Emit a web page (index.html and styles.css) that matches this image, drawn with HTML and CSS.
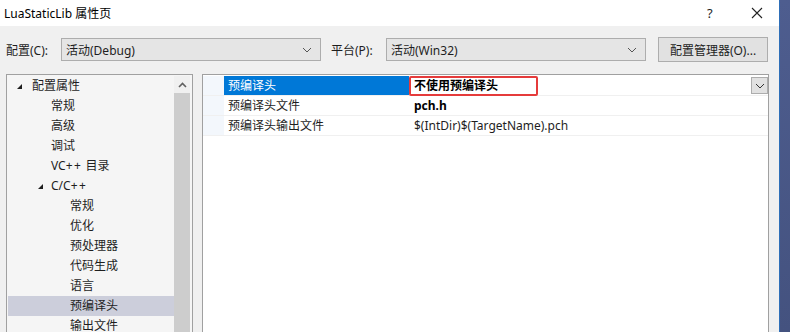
FILE: index.html
```html
<!DOCTYPE html>
<html lang="zh-CN">
<head>
    <meta charset="UTF-8">
    <title>LuaStaticLib 属性页</title>
    <link rel="stylesheet" href="styles.css">
</head>
<body>
    <div class="window">
        <div class="titlebar">
            <span class="title">LuaStaticLib 属性页</span>
            <span class="help">?</span>
            <span class="close">
                <svg width="12" height="12" viewBox="0 0 12 12"><path d="M1 1L11 11M11 1L1 11" stroke="#222" stroke-width="1.1"/></svg>
            </span>
        </div>

        <div class="toolbar">
            <span class="label">配置(C):</span>
            <div class="combo combo-config">
                <span>活动(Debug)</span>
                <svg class="chev" width="10" height="6" viewBox="0 0 10 6"><path d="M1 1L5 5L9 1" fill="none" stroke="#555" stroke-width="1"/></svg>
            </div>
            <span class="label label-platform">平台(P):</span>
            <div class="combo combo-platform">
                <span>活动(Win32)</span>
                <svg class="chev" width="10" height="6" viewBox="0 0 10 6"><path d="M1 1L5 5L9 1" fill="none" stroke="#555" stroke-width="1"/></svg>
            </div>
            <div class="button">配置管理器(O)...</div>
        </div>

        <div class="panels">
            <div class="tree">
                <div class="tree-items">
                    <div class="item lv0"><span class="tri"></span>配置属性</div>
                    <div class="item lv1">常规</div>
                    <div class="item lv1">高级</div>
                    <div class="item lv1">调试</div>
                    <div class="item lv1">VC<span class="pp">++</span> 目录</div>
                    <div class="item lv1 open"><span class="tri"></span>C/C<span class="pp">++</span></div>
                    <div class="item lv2">常规</div>
                    <div class="item lv2">优化</div>
                    <div class="item lv2">预处理器</div>
                    <div class="item lv2">代码生成</div>
                    <div class="item lv2">语言</div>
                    <div class="item lv2 selected">预编译头</div>
                    <div class="item lv2">输出文件</div>
                </div>
                <div class="scrollbar">
                    <div class="scroll-up">
                        <svg width="9" height="6" viewBox="0 0 9 6"><path d="M1 5L4.5 1.5L8 5" fill="none" stroke="#606060" stroke-width="1.6"/></svg>
                    </div>
                    <div class="scroll-thumb"></div>
                </div>
            </div>

            <div class="grid">
                <div class="row active">
                    <div class="gutter"></div>
                    <div class="name">预编译头</div>
                    <div class="value bold">
                        <span class="marked">不使用预编译头</span>
                        <span class="drop">
                            <svg width="10" height="6" viewBox="0 0 10 6"><path d="M1 1L5 5L9 1" fill="none" stroke="#333" stroke-width="1"/></svg>
                        </span>
                    </div>
                </div>
                <div class="row">
                    <div class="gutter"></div>
                    <div class="name">预编译头文件</div>
                    <div class="value bold">pch.h</div>
                </div>
                <div class="row">
                    <div class="gutter"></div>
                    <div class="name">预编译头输出文件</div>
                    <div class="value">$(IntDir)$(TargetName).pch</div>
                </div>
            </div>
        </div>
    </div>
    <div class="desktop"></div>
</body>
</html>
```

FILE: styles.css
```css
body {
    margin: 0;
    overflow: hidden;
    display: flex;
    height: 332px;
    background: #4a5888;
    font-family: "Noto Sans", "Noto Sans CJK SC", sans-serif;
    font-size: 12px;
    color: #1e1e1e;
}

.window {
    width: 779px;
    height: 332px;
    background: #f0f0f0;
    display: flex;
    flex-direction: column;
}

.desktop {
    flex: 1;
    background: linear-gradient(#4e5d8f, #44527f);
    border-left: 1px solid #2f6fb8;
}

.titlebar {
    height: 26px;
    background: #fff;
    display: flex;
    align-items: center;
    padding-left: 4px;
}

.title {
    flex: 1;
    font-size: 12px;
    color: #000;
}

.help {
    width: 12px;
    margin-right: 32px;
    font-size: 13px;
}

.close {
    display: flex;
    margin-right: 16px;
}

.toolbar {
    display: flex;
    align-items: center;
    height: 25px;
    margin-top: 11px;
    padding-left: 6px;
}

.label {
    width: 55px;
}

.label-platform {
    margin-left: 10px;
}

.combo {
    height: 23px;
    box-sizing: border-box;
    border: 1px solid #adadad;
    background: #e5e5e5;
    display: flex;
    align-items: center;
    padding: 0 8px 0 4px;
    justify-content: space-between;
}

.combo-config {
    width: 260px;
}

.combo-platform {
    width: 260px;
}

.button {
    margin-left: 12px;
    width: 110px;
    height: 25px;
    box-sizing: border-box;
    border: 1px solid #adadad;
    background: #e1e1e1;
    display: flex;
    align-items: center;
    justify-content: center;
}

.panels {
    display: flex;
    margin-top: 12px;
    padding-left: 6px;
    flex: 1;
    min-height: 0;
}

.tree {
    width: 187px;
    box-sizing: border-box;
    border: 1px solid #a0a0a0;
    border-bottom: none;
    background: #f5f5f5;
    display: flex;
    padding: 0 2px 0 1px;
}

.tree-items {
    flex: 1;
    padding-top: 1px;
}

.item {
    height: 20px;
    line-height: 20px;
    position: relative;
}

.pp {
    letter-spacing: 1.5px;
}

.lv0 { padding-left: 24px; }
.lv1 { padding-left: 43px; }
.lv2 { padding-left: 62px; }

.item.selected {
    background: #cccedb;
}

.tri {
    position: absolute;
    top: 8px;
    width: 0;
    height: 0;
    border-left: 5px solid transparent;
    border-bottom: 5px solid #1e1e1e;
}

.lv0 .tri { left: 9px; }
.lv1 .tri { left: 30px; }

.scrollbar {
    width: 16px;
    display: flex;
    flex-direction: column;
    margin-top: 1px;
}

.scroll-up {
    height: 17px;
    background: #f0f0f0;
    display: flex;
    align-items: center;
    justify-content: center;
}

.scroll-thumb {
    flex: 1;
    background: #cdcdcd;
}

.grid {
    margin-left: 9px;
    width: 567px;
    box-sizing: border-box;
    border: 1px solid #a0a0a0;
    border-bottom: none;
    background: #fff;
    padding-top: 1px;
}

.row {
    display: flex;
    height: 20px;
    box-sizing: border-box;
    line-height: 19px;
    border-bottom: 1px solid #f0f0f0;
}

.gutter {
    width: 21px;
    background: #f3f7fc;
}

.name {
    width: 185px;
    padding-left: 4px;
    box-sizing: border-box;
}

.row.active .name {
    background: #0078d7;
    color: #fff;
}

.value {
    flex: 1;
    padding-left: 5px;
    position: relative;
}

.bold {
    font-weight: bold;
    color: #000;
}

.marked::before {
    content: "";
    position: absolute;
    left: 0;
    top: 0;
    width: 129px;
    height: 20px;
    box-sizing: border-box;
    border: 2px solid #e53b3b;
    border-radius: 2px;
}

.drop {
    position: absolute;
    right: 0;
    top: 1px;
    width: 17px;
    height: 17px;
    box-sizing: border-box;
    border: 1px solid #adadad;
    background: #e1e1e1;
    display: flex;
    align-items: center;
    justify-content: center;
}
```
